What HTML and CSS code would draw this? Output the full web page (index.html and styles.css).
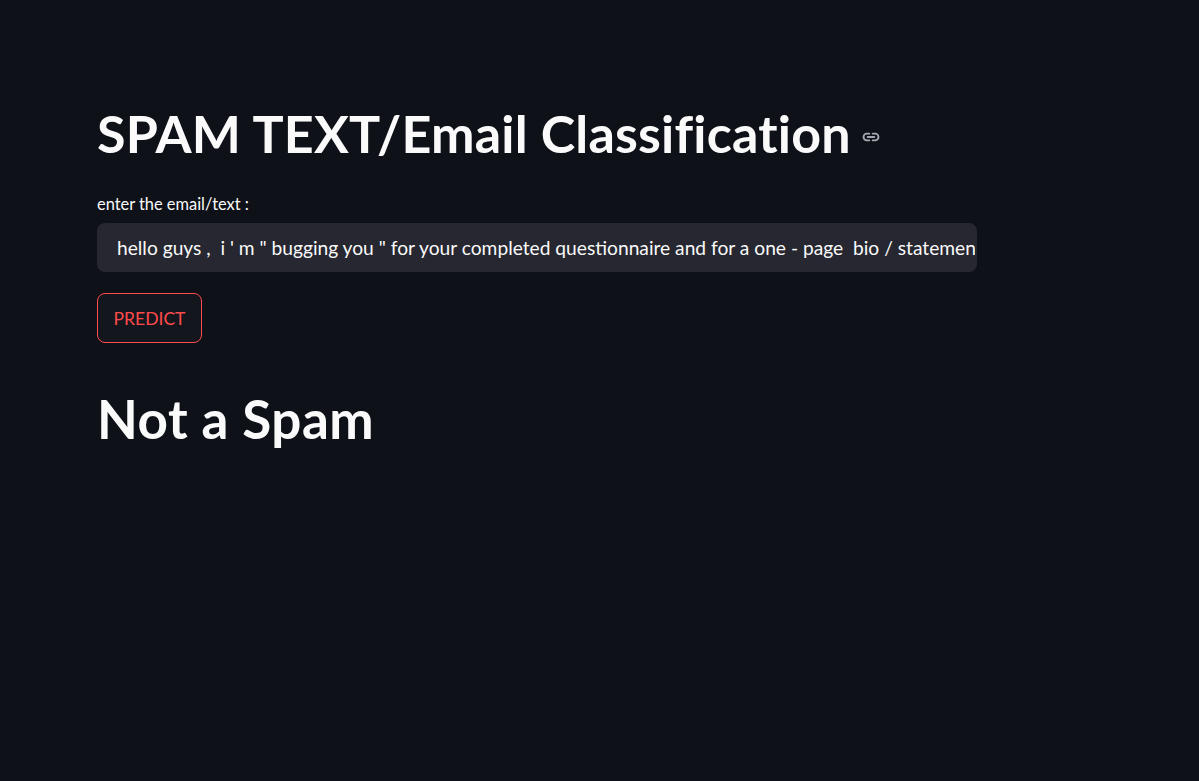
FILE: index.html
```html
<!DOCTYPE html>
<html>
<head>
<meta charset="utf-8">
<link rel="stylesheet" href="styles.css">
</head>
<body>
<main class="main">
  <div class="block">
    <h1 class="title">SPAM TEXT/Email Classification <span class="anchor"><svg width="20" height="20" viewBox="0 0 24 24" fill="none" stroke="#a3a8b4" stroke-width="2.2" stroke-linecap="round"><path d="M10 8H7a4 4 0 0 0 0 8h3"/><path d="M14 8h3a4 4 0 0 1 0 8h-3"/><path d="M8 12h8"/></svg></span></h1>
    <div class="field">
      <label class="label">enter the email/text :</label>
      <input class="input" type="text" value="hello guys ,  i ' m &quot; bugging you &quot; for your completed questionnaire and for a one - page  bio / statement on you">
    </div>
    <div class="actions">
      <button class="btn">PREDICT</button>
    </div>
    <h1 class="result">Not a Spam</h1>
  </div>
</main>
</body>
</html>
```
FILE: styles.css
```css
html, body {
  margin: 0;
  padding: 0;
  background: #0e1117;
  color: #fafafa;
  font-family: "Lato", "Liberation Sans", sans-serif;
}
.main {
  padding: 98px 0 0 97px;
}
.block {
  width: 880px;
  display: flex;
  flex-direction: column;
}
.title {
  margin: 0;
  font-size: 52px;
  font-weight: 700;
  line-height: 70px;
  letter-spacing: 0.2px;
  display: flex;
  align-items: center;
}
.anchor {
  display: inline-flex;
  margin-left: 10px;
  margin-top: 8px;
}
.field {
  margin-top: 24px;
  display: flex;
  flex-direction: column;
}
.label {
  font-size: 16.4px;
  line-height: 24px;
  margin-bottom: 7px;
}
.input {
  height: 49px;
  box-sizing: border-box;
  background: #262730;
  border: none;
  border-radius: 8px;
  color: #fafafa;
  font-family: inherit;
  font-size: 19.2px;
  padding: 0 2px 0 20px;
  outline: none;
}
.actions {
  margin-top: 21px;
}
.btn {
  height: 50px;
  width: 105px;
  background: #13161d;
  border: 1px solid #ff4b4b;
  color: #ff4b4b;
  border-radius: 8px;
  font-family: inherit;
  font-size: 17.5px;
  padding: 0;
}
.result {
  margin: 41px 0 0 0;
  font-size: 53px;
  font-weight: 700;
  line-height: 70px;
  letter-spacing: 0.5px;
}
```
